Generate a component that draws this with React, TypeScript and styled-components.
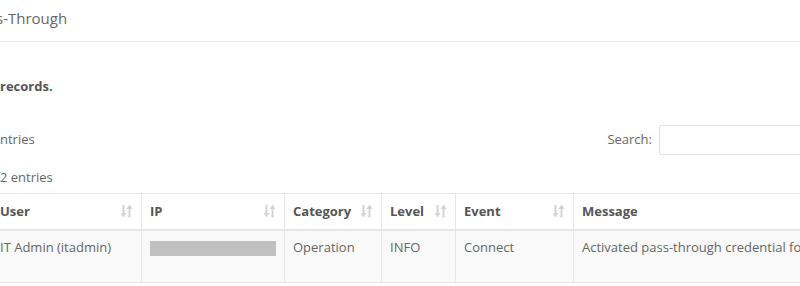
import React, { ReactElement } from "react";
import styled, { createGlobalStyle } from "styled-components";

const GlobalStyle = createGlobalStyle`
  html, body {
    margin: 0;
    padding: 0;
    background: #ffffff;
    overflow: hidden;
  }
  body {
    font-family: "Open Sans", "Liberation Sans", sans-serif;
    font-size: 13px;
    line-height: 1.42857;
    color: #666;
  }
`;

const Panel = styled.div`
  width: 1100px;
`;

const PanelHeading = styled.div`
  padding: 8px 15px 12px 0;
  border-bottom: 1px solid #e6e6e6;
  font-size: 15px;
  line-height: 21px;
  color: #666;
`;

// text that lies left of the visible area of the page
const Hanging = styled.span`
  display: inline-flex;
  justify-content: flex-end;
  width: 0;
  white-space: nowrap;
`;

const Clip = styled.span<{ $shift: number }>`
  margin-left: ${(p) => p.$shift}px;
`;

const PanelBody = styled.div`
  padding: 35px 0 0 0;
`;

const Lead = styled.p`
  margin: 0;
  font-weight: 700;
  color: #555;
`;

const Toolbar = styled.div`
  display: flex;
  align-items: center;
  justify-content: space-between;
  width: 800px;
  height: 30px;
  margin-top: 29px;
`;

const SearchLabel = styled.label`
  display: flex;
  align-items: center;
  gap: 7px;
  margin-right: -139px;
  color: #666;
`;

const SearchInput = styled.input`
  width: 280px;
  height: 30px;
  box-sizing: border-box;
  border: 1px solid #e2e2e2;
  border-radius: 2px;
  background: #fff;
  font: inherit;
`;

const Info = styled.div`
  margin-top: 13px;
`;

const Table = styled.table`
  border-collapse: collapse;
  margin-top: 7px;
  margin-left: -9px;
  width: 1060px;
  table-layout: fixed;
`;

const HeadCell = styled.th<{ $width?: number }>`
  width: ${(p) => (p.$width ? `${p.$width - 17}px` : "auto")};
  padding: 8px;
  border: 1px solid #e6e6e6;
  border-bottom: 2px solid #e6e6e6;
  text-align: left;
  font-weight: 700;
  color: #555;
  white-space: nowrap;
`;

const HeadInner = styled.div`
  display: flex;
  align-items: center;
  justify-content: space-between;
`;

const Row = styled.tr`
  height: 53px;
  background: #f9f9f9;
`;

const Cell = styled.td`
  padding: 7px 8px 9px;
  border: 1px solid #e6e6e6;
  vertical-align: top;
  color: #666;
  white-space: nowrap;
  overflow: hidden;
`;

const Redacted = styled.span`
  display: block;
  height: 15px;
  margin-top: 3px;
  background: #c0c0c0;
`;

const SortIcon = (): ReactElement => (
  <svg width="13" height="14" viewBox="0 0 13 14" fill="#d4d4d4">
    <rect x="2.5" y="1" width="2" height="9" />
    <polygon points="0.5,9 6.5,9 3.5,13.5" />
    <rect x="8.5" y="4" width="2" height="9.5" />
    <polygon points="6.5,5 12.5,5 9.5,0.5" />
  </svg>
);

type Column = { label: string; width?: number; sortable: boolean };

const columns: Column[] = [
  { label: "User", width: 150, sortable: true },
  { label: "IP", width: 143, sortable: true },
  { label: "Category", width: 97, sortable: true },
  { label: "Level", width: 74, sortable: true },
  { label: "Event", width: 118, sortable: true },
  { label: "Message", sortable: false },
];

const App = (): ReactElement => {
  return (
    <>
      <GlobalStyle />
      <Panel>
        <PanelHeading>
          <Clip $shift={-4}>
            <Hanging>Credential Pa</Hanging>s-Through
          </Clip>
        </PanelHeading>
        <PanelBody>
          <Lead>
            <Hanging>Below are the audit </Hanging>records.
          </Lead>
          <Toolbar>
            <span>
              <Hanging>Show 10 e</Hanging>ntries
            </span>
            <SearchLabel>
              Search:
              <SearchInput type="search" />
            </SearchLabel>
          </Toolbar>
          <Info>
            <Hanging>Showing 1 to 2 of </Hanging>2 entries
          </Info>
          <Table>
            <thead>
              <tr>
                {columns.map((c) => (
                  <HeadCell key={c.label} $width={c.width}>
                    <HeadInner>
                      {c.label}
                      {c.sortable && <SortIcon />}
                    </HeadInner>
                  </HeadCell>
                ))}
              </tr>
            </thead>
            <tbody>
              <Row>
                <Cell>IT Admin (itadmin)</Cell>
                <Cell>
                  <Redacted />
                </Cell>
                <Cell>Operation</Cell>
                <Cell>INFO</Cell>
                <Cell>Connect</Cell>
                <Cell>Activated pass-through credential for IT Admin (itadmin)</Cell>
              </Row>
            </tbody>
          </Table>
        </PanelBody>
      </Panel>
    </>
  );
};

export default App;
